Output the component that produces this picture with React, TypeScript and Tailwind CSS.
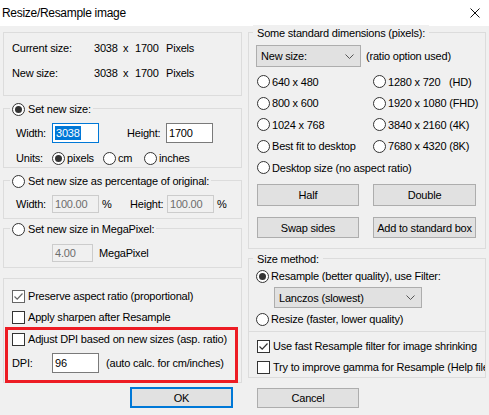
import type { ReactNode } from 'react';

const Radio = ({ checked = false }: { checked?: boolean }) => (
  <span className="flex h-[13px] w-[13px] shrink-0 items-center justify-center rounded-full border border-[#333333] bg-white">
    {checked && <span className="h-[7px] w-[7px] rounded-full bg-[#333333]" />}
  </span>
);

const Check = ({ checked = false, muted = false }: { checked?: boolean; muted?: boolean }) => (
  <span
    className={`flex h-[13px] w-[13px] shrink-0 items-center justify-center border bg-white ${
      muted ? 'border-[#666666]' : 'border-[#333333]'
    }`}
  >
    {checked && (
      <svg width="11" height="11" viewBox="0 0 11 11" fill="none">
        <path d="M1.5 5.5 L4.2 8.2 L9.5 2.5" stroke={muted ? '#666666' : '#333333'} strokeWidth="1.2" />
      </svg>
    )}
  </span>
);

const Chevron = () => (
  <svg width="9" height="5" viewBox="0 0 9 5" fill="none">
    <path d="M0.5 0.5 L4.5 4.5 L8.5 0.5" stroke="#555555" strokeWidth="1" />
  </svg>
);

const Legend = ({ children, className = '' }: { children: ReactNode; className?: string }) => (
  <div className={`-mt-[8px] flex h-[16px] w-fit items-center bg-[#f0f0f0] ${className}`}>{children}</div>
);

const Field = ({ value, w, disabled = false }: { value: string; w: string; disabled?: boolean }) => (
  <div
    className={`flex h-full items-center border pl-[2px] ${w} ${
      disabled ? 'border-[#cccccc] bg-[#f0f0f0] text-[#6d6d6d]' : 'border-[#7a7a7a] bg-white text-black'
    }`}
  >
    {value}
  </div>
);

const Button = ({ label, w, h }: { label: string; w: string; h: string }) => (
  <div className={`flex items-center justify-center border border-[#adadad] bg-[#e1e1e1] ${w} ${h}`}>{label}</div>
);

const dims: [string, string][] = [
  ['640 x 480', '1280 x 720   (HD)'],
  ['800 x 600', '1920 x 1080 (FHD)'],
  ['1024 x 768', '3840 x 2160 (4K)'],
  ['Best fit to desktop', '7680 x 4320 (8K)'],
];

export default function App() {
  return (
    <div className="h-[415px] w-[489px] overflow-hidden bg-[#f0f0f0] font-['Liberation_Sans',Arial,sans-serif] text-[11px] leading-[14px] tracking-[-0.2px] text-black">
      {/* title bar */}
      <div className="flex h-[26px] items-center justify-between bg-white pl-[2px] pr-[9px]">
        <span className="text-[12px] tracking-[-0.3px]">Resize/Resample image</span>
        <svg width="10" height="10" viewBox="0 0 10 10" fill="none">
          <path d="M0.5 0.5 L9.5 9.5 M9.5 0.5 L0.5 9.5" stroke="#111111" strokeWidth="1" />
        </svg>
      </div>

      <div className="flex pl-[3px]">
        {/* left column */}
        <div className="flex w-[239px] flex-col">
          <div className="mt-[6px] flex h-[64px] flex-col gap-[11px] border border-[#dcdcdc] pl-[8px] pt-[8px]">
            {['Current size:', 'New size:'].map((label) => (
              <div key={label} className="flex h-[14px] items-center">
                <span className="w-[82px]">{label}</span>
                <span className="w-[29px]">3038</span>
                <span className="w-[12px]">x</span>
                <span className="w-[31px]">1700</span>
                <span>Pixels</span>
              </div>
            ))}
          </div>

          <div className="mt-[12px] flex h-[60px] flex-col border border-[#dcdcdc]">
            <Legend className="ml-[6px] gap-[3px] px-[2px]">
              <Radio checked />
              <span>Set new size:</span>
            </Legend>
            <div className="mt-[6px] flex h-[20px] items-center pl-[12px]">
              <span className="w-[36px]">Width:</span>
              <div className="flex h-full w-[47px] items-center border border-[#0078d7] bg-white pl-[2px]">
                <span className="bg-[#0078d7] px-[1px] text-white">3038</span>
              </div>
              <span className="ml-[28px] w-[39px]">Height:</span>
              <Field value="1700" w="w-[47px]" />
            </div>
            <div className="mt-[7px] flex h-[16px] items-center pl-[12px]">
              <span className="w-[36px]">Units:</span>
              <Radio checked />
              <span className="ml-[2px] w-[36px]">pixels</span>
              <Radio />
              <span className="ml-[2px] w-[26px]">cm</span>
              <Radio />
              <span className="ml-[2px]">inches</span>
            </div>
          </div>

          <div className="mt-[12px] flex h-[39px] flex-col border border-[#dcdcdc]">
            <Legend className="ml-[6px] gap-[3px] px-[2px]">
              <Radio />
              <span>Set new size as percentage of original:</span>
            </Legend>
            <div className="mt-[6px] flex h-[18px] items-center pl-[12px]">
              <span className="w-[36px]">Width:</span>
              <Field value="100.00" w="w-[47px]" disabled />
              <span className="ml-[3px] w-[28px]">%</span>
              <span className="w-[37px]">Height:</span>
              <Field value="100.00" w="w-[47px]" disabled />
              <span className="ml-[3px]">%</span>
            </div>
          </div>

          <div className="mt-[9px] flex h-[40px] flex-col border border-[#dcdcdc]">
            <Legend className="ml-[6px] gap-[3px] px-[2px]">
              <Radio />
              <span>Set new size in MegaPixel:</span>
            </Legend>
            <div className="mt-[7px] flex h-[18px] items-center pl-[48px]">
              <Field value="4.00" w="w-[41px]" disabled />
              <span className="ml-[6px]">MegaPixel</span>
            </div>
          </div>

          <div className="relative mt-[10px] flex h-[105px] flex-col border border-[#dcdcdc] pl-[8px] pt-[9px]">
            <div className="flex h-[16px] items-center gap-[3px]">
              <Check checked muted />
              <span>Preserve aspect ratio (proportional)</span>
            </div>
            <div className="mt-[5px] flex h-[16px] items-center gap-[3px]">
              <Check />
              <span>Apply sharpen after Resample</span>
            </div>
            <div className="mt-[6px] flex h-[16px] items-center gap-[3px]">
              <Check />
              <span>Adjust DPI based on new sizes (asp. ratio)</span>
            </div>
            <div className="mt-[6px] flex h-[20px] items-center">
              <span className="w-[40px]">DPI:</span>
              <Field value="96" w="w-[47px]" />
              <span className="ml-[7px]">(auto calc. for cm/inches)</span>
            </div>
            <div className="absolute left-[1px] top-[48px] h-[56px] w-[233px] border-[3px] border-[#ed1c24]" />
          </div>

          <div className="ml-[127px] mt-[4px] flex h-[21px] w-[103px] items-center justify-center border-2 border-[#0078d7] bg-[#e1e1e1]">
            OK
          </div>
        </div>

        {/* right column */}
        <div className="ml-[6px] flex w-[238px] flex-col">
          <div className="mt-[6px] flex h-[217px] flex-col border border-[#dcdcdc]">
            <Legend className="ml-[4px] px-[4px]">
              <span>Some standard dimensions (pixels):</span>
            </Legend>
            <div className="mt-[4px] flex h-[22px] items-center pl-[7px]">
              <div className="flex h-full w-[105px] items-center justify-between border border-[#adadad] bg-[#e1e1e1] pl-[4px] pr-[6px]">
                <span>New size:</span>
                <Chevron />
              </div>
              <span className="ml-[5px]">(ratio option used)</span>
            </div>
            <div className="mt-[4px] grid auto-rows-[21.5px] grid-cols-[116px_1fr] pl-[8px]">
              {dims.map(([a, b]) => [
                <div key={a} className="flex items-center gap-[2px]">
                  <Radio />
                  <span>{a}</span>
                </div>,
                <div key={b} className="flex items-center gap-[2px]">
                  <Radio />
                  <span className="whitespace-pre">{b}</span>
                </div>,
              ])}
              <div className="col-span-2 flex items-center gap-[2px]">
                <Radio />
                <span>Desktop size (no aspect ratio)</span>
              </div>
            </div>
            <div className="mt-[5.5px] flex pl-[8px]">
              <Button label="Half" w="w-[102px]" h="h-[22px]" />
              <div className="ml-[14px]">
                <Button label="Double" w="w-[103px]" h="h-[22px]" />
              </div>
            </div>
            <div className="mt-[11px] flex pl-[8px]">
              <Button label="Swap sides" w="w-[102px]" h="h-[21px]" />
              <div className="ml-[14px]">
                <Button label="Add to standard box" w="w-[103px]" h="h-[21px]" />
              </div>
            </div>
          </div>

          <div className="mt-[9px] flex h-[120px] flex-col border border-[#dcdcdc]">
            <Legend className="ml-[4px] px-[4px]">
              <span>Size method:</span>
            </Legend>
            <div className="mt-[1px] flex h-[16px] items-center gap-[2px] pl-[7px]">
              <Radio checked />
              <span>Resample (better quality), use Filter:</span>
            </div>
            <div className="ml-[25px] mt-[3px] flex h-[21px] w-[148px] items-center justify-between border border-[#adadad] bg-[#e1e1e1] pl-[4px] pr-[6px]">
              <span>Lanczos (slowest)</span>
              <Chevron />
            </div>
            <div className="mt-[3px] flex h-[16px] items-center gap-[2px] pl-[7px]">
              <Radio />
              <span>Resize (faster, lower quality)</span>
            </div>
            <div className="mt-[4px] h-px bg-[#dcdcdc]" />
            <div className="mt-[6px] flex h-[16px] items-center gap-[3px] pl-[8px]">
              <Check checked />
              <span className="whitespace-nowrap">Use fast Resample filter for image shrinking</span>
            </div>
            <div className="mt-[5px] flex h-[16px] items-center gap-[3px] overflow-hidden pl-[8px]">
              <Check />
              <span className="whitespace-nowrap">Try to improve gamma for Resample (Help file)</span>
            </div>
          </div>

          <div className="ml-[9px] mt-[10px]">
            <Button label="Cancel" w="w-[102px]" h="h-[20px]" />
          </div>
        </div>
      </div>
    </div>
  );
}
